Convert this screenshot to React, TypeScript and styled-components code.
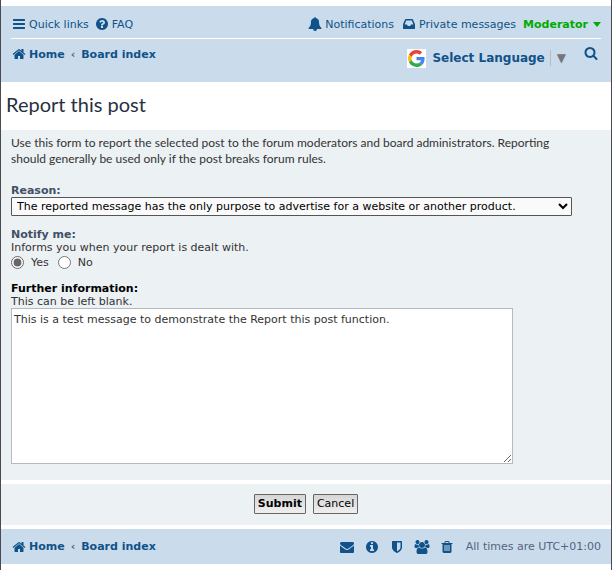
import React from "react";
import styled, { createGlobalStyle } from "styled-components";

const GlobalStyle = createGlobalStyle`
  *, *::before, *::after { box-sizing: border-box; }
  html { background: #fff; }
  body {
    margin: 0;
    color: #536482;
    font: 11px/13px Verdana, "DejaVu Sans", sans-serif;
  }
`;

const Page = styled.div`
  min-height: 100vh;
  padding-top: 6px;
  background: #fff;
  border: solid #4a4a50;
  border-width: 0 1px;
`;

const NavBar = styled.nav`
  padding: 0 10px;
  background: #cadceb;
`;

const NavRow = styled.div<{ $height: number; $ruled?: boolean }>`
  display: flex;
  justify-content: space-between;
  min-height: ${(p) => p.$height}px;
  padding: ${(p) => (p.$ruled ? "10px 0 6px" : "7px 0 0")};
  border-bottom: ${(p) => (p.$ruled ? "1px solid #fff" : "0")};
`;

const Group = styled.div<{ $gap: number }>`
  display: flex;
  align-items: flex-start;
  gap: ${(p) => p.$gap}px;
`;

const NavLink = styled.a<{ $strong?: boolean; $online?: boolean }>`
  display: inline-flex;
  align-items: center;
  gap: 2px;
  height: 16px;
  color: ${(p) => (p.$online ? "#00aa00" : "#105289")};
  font-weight: ${(p) => (p.$strong ? 700 : 400)};
  text-decoration: none;
  white-space: nowrap;
  &:hover { text-decoration: underline; }
`;

const Glyph = styled.svg`
  display: block;
  flex: none;
  width: 16px;
  height: 14px;
  fill: currentColor;
`;

const Caret = styled.svg`
  width: 8px;
  height: 5px;
  margin-left: 3px;
  fill: currentColor;
`;

const Crumbs = styled.div`
  display: flex;
  align-items: center;
  gap: 6px;
  height: 16px;
  font-weight: 700;
`;

const Translate = styled.div`
  display: flex;
  align-items: center;
  margin-top: 2px;
  height: 20px;
`;

const GoogleMark = styled.svg`
  width: 19px;
  height: 19px;
  margin-right: 6px;
  background: #fff;
`;

const LanguageButton = styled.button`
  display: flex;
  align-items: center;
  padding: 0;
  border: 0;
  background: none;
  color: #105289;
  font: 700 12px/16px Verdana, "DejaVu Sans", sans-serif;
  cursor: pointer;
`;

const LanguageArrow = styled.span`
  margin-left: 5px;
  padding-left: 6px;
  border-left: 1px solid #bbb;
  color: #76767a;
  font-weight: 400;
`;

const SearchButton = styled.button`
  display: flex;
  padding: 0 2px;
  border: 0;
  background: none;
  color: #105289;
  cursor: pointer;
`;

const Title = styled.h2`
  margin: 0;
  padding: 10px 5px 13px;
  color: #28313f;
  font: 400 20px/25px "Trebuchet MS", Lato, sans-serif;
`;

const Panel = styled.section<{ $centered?: boolean }>`
  display: ${(p) => (p.$centered ? "flex" : "block")};
  justify-content: center;
  gap: 7px;
  margin-bottom: 4px;
  padding: ${(p) => (p.$centered ? "10px 10px 11px" : "5px 10px 16px")};
  background: #ecf1f3;
  color: #333;
`;

const Intro = styled.p`
  margin: 0 0 17px;
  padding-right: 20px;
  color: #333;
  font: 12px/16px "Trebuchet MS", Lato, sans-serif;
`;

const Field = styled.div<{ $space: number }>`
  margin-bottom: ${(p) => p.$space}px;
`;

const Label = styled.label<{ $dark?: boolean }>`
  display: block;
  color: ${(p) => (p.$dark ? "#000" : "#425067")};
  font-weight: 700;
`;

const RadioField = styled.fieldset`
  margin: 0 0 12px;
  padding: 0;
  border: 0;
`;

const Legend = styled.legend`
  padding: 0;
  color: #425067;
  font-weight: 700;
`;

const Select = styled.select`
  display: block;
  width: 95%;
  height: 19px;
  padding: 1px;
  border: 1px solid #555;
  border-radius: 1px;
  background: #fafafa;
  color: #000;
  font: 11px Verdana, "DejaVu Sans", sans-serif;
`;

const Radios = styled.div`
  display: flex;
  gap: 9px;
`;

const RadioLabel = styled.label`
  display: flex;
  align-items: center;
  gap: 7px;
  height: 16px;
`;

const Radio = styled.input`
  width: 13px;
  height: 13px;
  margin: 0;
  accent-color: #666;
`;

const TextArea = styled.textarea`
  display: block;
  width: 85%;
  height: 156px;
  padding: 3px 2px;
  border: 1px solid #b4bac0;
  border-radius: 0;
  background: #fff;
  color: #333;
  font: 11px/15px Verdana, "DejaVu Sans", sans-serif;
`;

const Button = styled.button<{ $primary?: boolean }>`
  height: 20px;
  padding: 0 3px;
  border: 1px solid #666;
  border-radius: 1px;
  background: linear-gradient(#d6d6d6, #efefef);
  color: #000;
  font: ${(p) => (p.$primary ? 700 : 400)} 11px/16px Verdana, "DejaVu Sans", sans-serif;
`;

const Footer = styled.footer`
  display: flex;
  align-items: center;
  justify-content: space-between;
  min-height: 35px;
  padding: 0 10px;
  background: #cadceb;
`;

const Timezone = styled.span`
  margin-left: 2px;
  color: #536482;
  line-height: 16px;
`;

const paths = {
  bars: "M1664 1344v128q0 26-19 45t-45 19h-1408q-26 0-45-19t-19-45v-128q0-26 19-45t45-19h1408q26 0 45 19t19 45zm0-512v128q0 26-19 45t-45 19h-1408q-26 0-45-19t-19-45v-128q0-26 19-45t45-19h1408q26 0 45 19t19 45zm0-512v128q0 26-19 45t-45 19h-1408q-26 0-45-19t-19-45v-128q0-26 19-45t45-19h1408q26 0 45 19t19 45z",
  question: "M1024 1376v-192q0-14-9-23t-23-9h-192q-14 0-23 9t-9 23v192q0 14 9 23t23 9h192q14 0 23-9t9-23zm256-672q0-88-55.5-163t-138.5-116-170-41q-243 0-371 213-15 24 8 42l132 100q7 6 19 6 16 0 25-12 53-68 86-92 34-24 86-24 48 0 85.5 26t37.5 59q0 38-20 61t-68 45q-63 28-115.5 86.5t-52.5 125.5v36q0 14 9 23t23 9h192q14 0 23-9t9-23q0-19 21.5-49.5t54.5-49.5q32-18 49-28.5t46-35 44.5-48 28-60.5 12.5-81zm384 192q0 209-103 385.5t-279.5 279.5-385.5 103-385.5-103-279.5-279.5-103-385.5 103-385.5 279.5-279.5 385.5-103 385.5 103 279.5 279.5 103 385.5z",
  bell: "M912 1696q0-16-16-16-59 0-101.5-42.5t-42.5-101.5q0-16-16-16t-16 16q0 73 51.5 124.5t124.5 51.5q16 0 16-16zm816-288q0 52-38 90t-90 38h-448q0 106-75 181t-181 75-181-75-75-181h-448q-52 0-90-38t-38-90q50-42 91-88t85-119.5 74.5-158.5 50-206 19.5-260q0-152 117-282.5t307-158.5q-8-19-8-39 0-40 28-68t68-28 68 28 28 68q0 20-8 39 190 28 307 158.5t117 282.5q0 139 19.5 260t50 206 74.5 158.5 85 119.5 91 88z",
  inbox: "M1151 960h316q-1-3-2.5-8t-2.5-8l-212-496h-708l-212 496q-1 2-2.5 8t-2.5 8h316l95 192h320zm513 30v482q0 26-19 45t-45 19h-1408q-26 0-45-19t-19-45v-482q0-62 25-123l238-552q10-25 36.5-42t52.5-17h832q26 0 52.5 17t36.5 42l238 552q25 61 25 123z",
  home: "M1472 992v480q0 26-19 45t-45 19h-384v-384h-256v384h-384q-26 0-45-19t-19-45v-480q0-1 .5-3t.5-3l575-474 575 474q1 2 1 6zm223-69l-62 74q-8 9-21 11h-3q-13 0-21-7l-692-577-692 577q-12 8-24 7-13-2-21-11l-62-74q-8-10-7-23.5t11-21.5l719-599q32-26 76-26t76 26l244 204v-195q0-14 9-23t23-9h192q14 0 23 9t9 23v408l219 182q10 8 11 21.5t-7 23.5z",
  search: "M1216 832q0-185-131.5-316.5t-316.5-131.5-316.5 131.5-131.5 316.5 131.5 316.5 316.5 131.5 316.5-131.5 131.5-316.5zm512 832q0 52-38 90t-90 38q-54 0-90-38l-343-342q-179 124-399 124-143 0-273.5-55.5t-225-150-150-225-55.5-273.5 55.5-273.5 150-225 225-150 273.5-55.5 273.5 55.5 225 150 150 225 55.5 273.5q0 220-124 399l343 343q37 37 37 90z",
  envelope: "M1792 710v794q0 66-47 113t-113 47h-1472q-66 0-113-47t-47-113v-794q44 49 101 87 362 246 497 345 57 42 92.5 65.5t94.5 48 110 24.5h2q51 0 110-24.5t94.5-48 92.5-65.5q170-123 498-345 57-39 100-87zm0-294q0 79-49 151t-122 123q-376 261-468 325-10 7-42.5 30.5t-54 38-52 32.5-57.5 27-50 9h-2q-23 0-50-9t-57.5-27-52-32.5-54-38-42.5-30.5q-91-64-262-182.5t-205-142.5q-62-42-117-115.5t-55-136.5q0-78 41.5-130t118.5-52h1472q65 0 112.5 47t47.5 113z",
  info: "M1152 1376v-160q0-14-9-23t-23-9h-96v-512q0-14-9-23t-23-9h-320q-14 0-23 9t-9 23v160q0 14 9 23t23 9h96v320h-96q-14 0-23 9t-9 23v160q0 14 9 23t23 9h448q14 0 23-9t9-23zm-128-896v-160q0-14-9-23t-23-9h-192q-14 0-23 9t-9 23v160q0 14 9 23t23 9h192q14 0 23-9t9-23zm640 416q0 209-103 385.5t-279.5 279.5-385.5 103-385.5-103-279.5-279.5-103-385.5 103-385.5 279.5-279.5 385.5-103 385.5 103 279.5 279.5 103 385.5z",
  shield: "M1344 960v-640h-448v1137q119-63 213-137 235-184 235-360zm192-768v768q0 86-33.5 170.5t-83 150-118 127.5-126.5 103-121 77.5-89.5 49.5-42.5 20q-12 6-26 6t-26-6q-16-7-42.5-20t-89.5-49.5-121-77.5-126.5-103-118-127.5-83-150-33.5-170.5v-768q0-26 19-45t45-19h1152q26 0 45 19t19 45z",
  users: "M593 896q-162 5-265 128h-134q-82 0-138-40.5t-56-118.5q0-353 124-353 6 0 43.5 21t97.5 42.5 119 21.5q67 0 133-23-5 37-5 66 0 159 90 256zm1071 637q0 120-73 189.5t-194 69.5h-874q-121 0-194-69.5t-73-189.5q0-53 3.5-103.5t14-109 26.5-108.5 43-97.5 62-81 85.5-53.5 111.5-20q10 0 43 21.5t73 48 107 48 135 21.5 135-21.5 107-48 73-48 43-21.5q61 0 111.5 20t85.5 53.5 62 81 43 97.5 26.5 108.5 14 109 3.5 103.5zm-1024-1277q0 106-75 181t-181 75-181-75-75-181 75-181 181-75 181 75 75 181zm704 384q0 159-112.5 271.5t-271.5 112.5-271.5-112.5-112.5-271.5 112.5-271.5 271.5-112.5 271.5 112.5 112.5 271.5zm576 225q0 78-56 118.5t-138 40.5h-134q-103-123-265-128 93-97 93-256 0-29-5-66 66 23 133 23 59 0 119-21.5t97.5-42.5 43.5-21q124 0 124 353zm-128-609q0 106-75 181t-181 75-181-75-75-181 75-181 181-75 181 75 75 181z",
  trash: "M704 1376v-704q0-14-9-23t-23-9h-64q-14 0-23 9t-9 23v704q0 14 9 23t23 9h64q14 0 23-9t9-23zm256 0v-704q0-14-9-23t-23-9h-64q-14 0-23 9t-9 23v704q0 14 9 23t23 9h64q14 0 23-9t9-23zm256 0v-704q0-14-9-23t-23-9h-64q-14 0-23 9t-9 23v704q0 14 9 23t23 9h64q14 0 23-9t9-23zm-544-992h448l-48-117q-7-9-17-11h-317q-10 2-17 11zm928 32v64q0 14-9 23t-23 9h-96v948q0 83-47 143.5t-113 60.5h-832q-66 0-113-58.5t-47-141.5v-952h-96q-14 0-23-9t-9-23v-64q0-14 9-23t23-9h309l70-167q15-37 54-63t79-26h320q40 0 79 26t54 63l70 167h309q14 0 23 9t9 23z",
};

function Icon({ name }: { name: keyof typeof paths }) {
  return (
    <Glyph viewBox={name === "users" ? "0 0 1920 1792" : "0 0 1792 1792"} aria-hidden="true">
      <path d={paths[name]} />
    </Glyph>
  );
}

function Breadcrumbs() {
  return (
    <Crumbs>
      <NavLink href="#home" $strong><Icon name="home" />Home</NavLink>
      <span>‹</span>
      <NavLink href="#index" $strong>Board index</NavLink>
    </Crumbs>
  );
}

const footerLinks: { icon: keyof typeof paths; label: string }[] = [
  { icon: "envelope", label: "Contact us" },
  { icon: "info", label: "About" },
  { icon: "shield", label: "Policies" },
  { icon: "users", label: "Members" },
  { icon: "trash", label: "Delete cookies" },
];

export default function App() {
  return (
    <>
      <GlobalStyle />
      <Page>
        <NavBar>
          <NavRow $height={33} $ruled>
            <Group $gap={5}>
              <NavLink href="#links"><Icon name="bars" />Quick links</NavLink>
              <NavLink href="#faq"><Icon name="question" />FAQ</NavLink>
            </Group>
            <Group $gap={7}>
              <NavLink href="#notifications"><Icon name="bell" />Notifications</NavLink>
              <NavLink href="#messages"><Icon name="inbox" />Private messages</NavLink>
              <NavLink href="#account" $strong $online>
                Moderator
                <Caret viewBox="0 0 8 5" aria-hidden="true"><path d="M0 0h8L4 5z" /></Caret>
              </NavLink>
            </Group>
          </NavRow>
          <NavRow $height={43}>
            <Breadcrumbs />
            <Group $gap={15}>
              <Translate>
                <GoogleMark viewBox="-3 -3 54 54" aria-hidden="true">
                  <path fill="#EA4335" d="M24 9.5c3.54 0 6.71 1.22 9.21 3.6l6.85-6.85C35.9 2.38 30.47 0 24 0 14.62 0 6.51 5.38 2.56 13.22l7.98 6.19C12.43 13.72 17.74 9.5 24 9.5z" />
                  <path fill="#4285F4" d="M46.98 24.55c0-1.57-.15-3.09-.38-4.55H24v9.02h12.94c-.58 2.96-2.26 5.48-4.78 7.18l7.73 6c4.51-4.18 7.09-10.36 7.09-17.65z" />
                  <path fill="#FBBC05" d="M10.53 28.59c-.48-1.45-.76-2.99-.76-4.59s.27-3.14.76-4.59l-7.98-6.19C.92 16.46 0 20.12 0 24c0 3.88.92 7.54 2.56 10.78l7.97-6.19z" />
                  <path fill="#34A853" d="M24 48c6.48 0 11.93-2.13 15.89-5.81l-7.73-6c-2.15 1.45-4.92 2.3-8.16 2.3-6.26 0-11.57-4.22-13.47-9.91l-7.98 6.19C6.51 42.62 14.62 48 24 48z" />
                </GoogleMark>
                <LanguageButton type="button">
                  Select Language<LanguageArrow>▼</LanguageArrow>
                </LanguageButton>
              </Translate>
              <SearchButton type="button" aria-label="Search"><Icon name="search" /></SearchButton>
            </Group>
          </NavRow>
        </NavBar>

        <Title>Report this post</Title>

        <form onSubmit={(e) => e.preventDefault()}>
          <Panel>
            <Intro>
              Use this form to report the selected post to the forum moderators and board
              administrators. Reporting should generally be used only if the post breaks forum rules.
            </Intro>
            <Field $space={12}>
              <Label htmlFor="reason">Reason:</Label>
              <Select id="reason">
                <option>The reported message has the only purpose to advertise for a website or another product.</option>
              </Select>
            </Field>
            <RadioField>
              <Legend>Notify me:</Legend>
              <div>Informs you when your report is dealt with.</div>
              <Radios>
                <RadioLabel><Radio type="radio" name="notify" defaultChecked />Yes</RadioLabel>
                <RadioLabel><Radio type="radio" name="notify" />No</RadioLabel>
              </Radios>
            </RadioField>
            <Field $space={0}>
              <Label htmlFor="details" $dark>Further information:</Label>
              <div id="details-hint">This can be left blank.</div>
              <TextArea
                id="details"
                aria-describedby="details-hint"
                defaultValue="This is a test message to demonstrate the Report this post function."
              />
            </Field>
          </Panel>
          <Panel $centered>
            <Button type="submit" $primary>Submit</Button>
            <Button type="button">Cancel</Button>
          </Panel>
        </form>

        <Footer>
          <Breadcrumbs />
          <Group $gap={9}>
            {footerLinks.map((item) => (
              <NavLink key={item.icon} href={`#${item.icon}`} aria-label={item.label}>
                <Icon name={item.icon} />
              </NavLink>
            ))}
            <Timezone>All times are UTC+01:00</Timezone>
          </Group>
        </Footer>
      </Page>
    </>
  );
}
